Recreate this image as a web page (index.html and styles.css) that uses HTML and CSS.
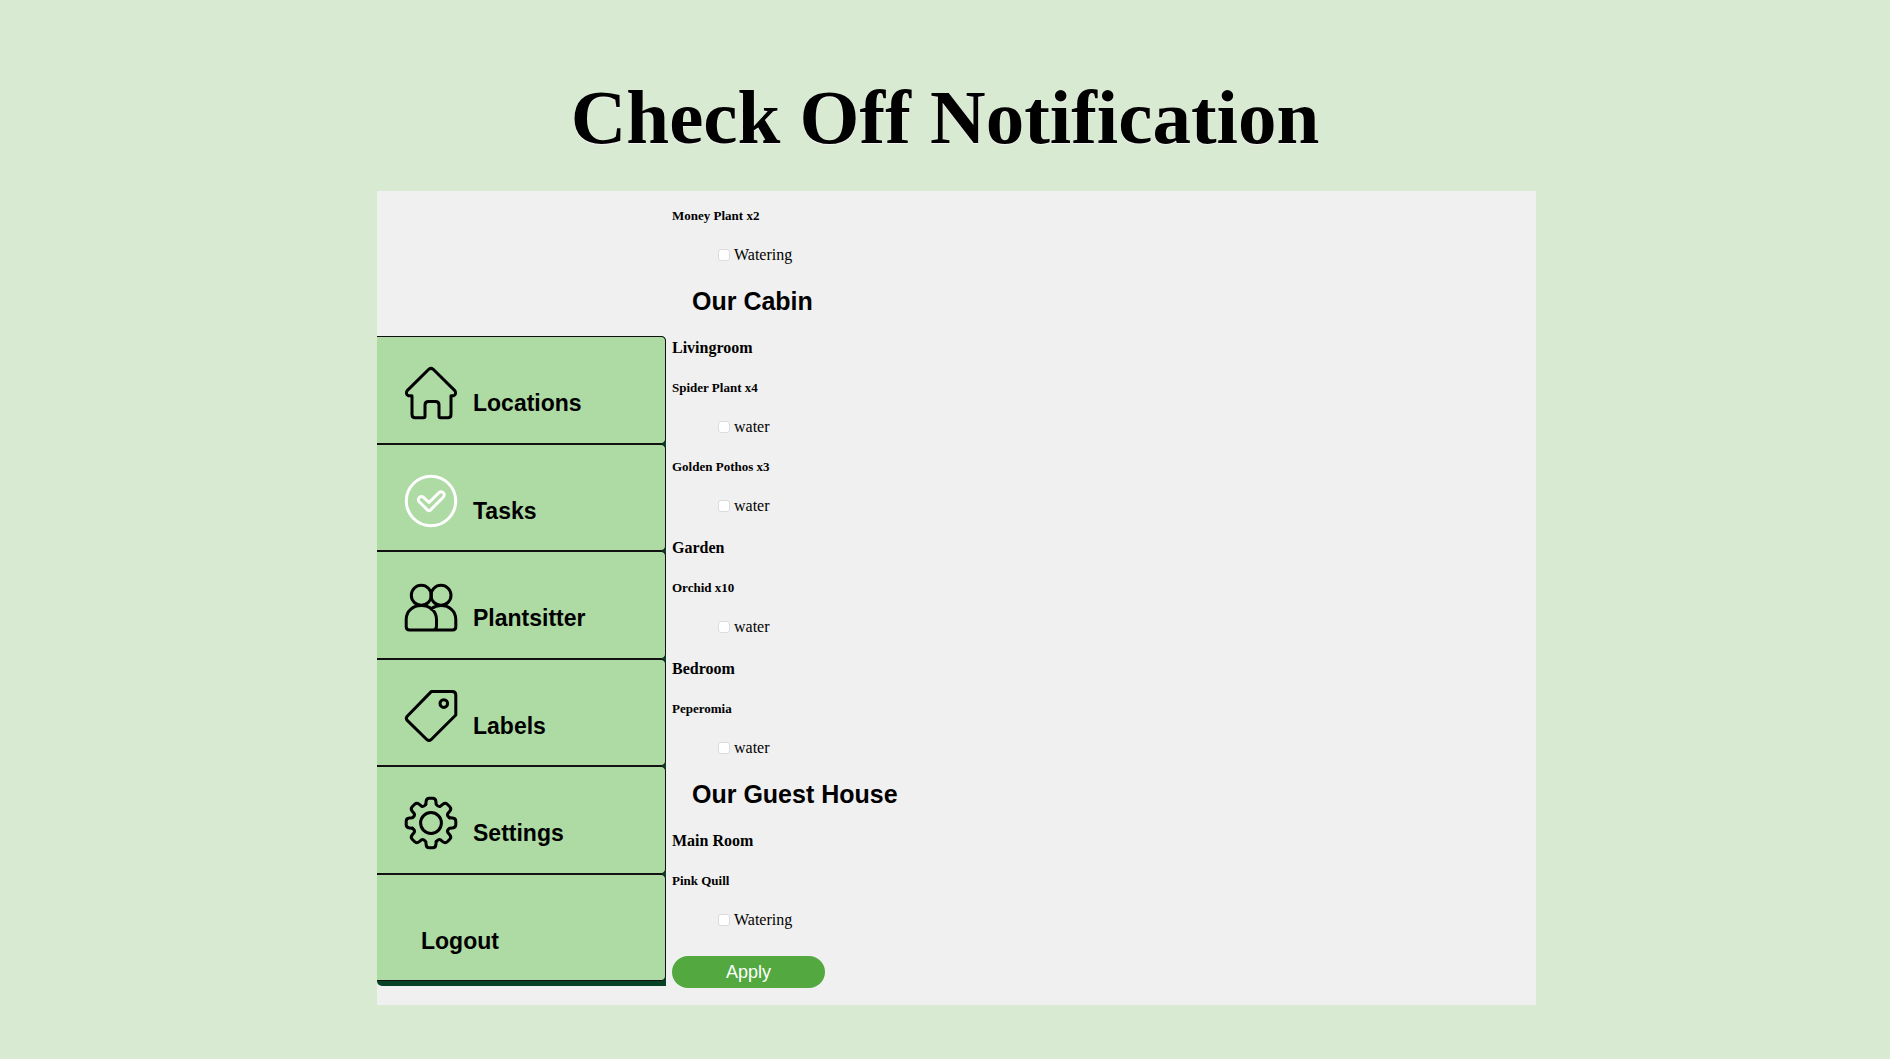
FILE: index.html
```html
<!DOCTYPE html>
<html lang="en">
<head>
<meta charset="utf-8">
<title>Check Off Notification</title>
<link rel="stylesheet" href="styles.css">
</head>
<body>
<h1 class="title">Check Off Notification</h1>
<div class="panel">
  <nav class="menu">
    <a class="item" href="#locations">
      <svg class="icon" viewBox="0 0 52 52"><path d="M23.8 2.3 2.2 23.6Q.2 27 3.4 28.8H7V47.5Q7 50.8 10 50.8H18.5Q20 50.8 20 49V38Q20 34.5 23.5 34.5H30.5Q34 34.5 34 38V49Q34 50.8 35.5 50.8H43Q46 50.8 46 47.5V28.8H48.6Q51.8 27 49.8 23.6L28.2 2.3Q26 .5 23.8 2.3Z"/></svg>
      <span>Locations</span>
    </a>
    <a class="item" href="#tasks">
      <svg class="icon icon-active" viewBox="0 0 52 52"><circle cx="26" cy="26" r="24.7"/><path d="M24 27.5 18.8 22.6A3 3 0 0 0 14.2 26.8L22.6 35.1Q24 36.4 25.4 35.1L38.2 22.2A3 3 0 0 0 34 17.6Z"/></svg>
      <span>Tasks</span>
    </a>
    <a class="item" href="#plantsitter">
      <svg class="icon" viewBox="0 0 52 52"><circle cx="16.3" cy="13.3" r="10"/><circle cx="36" cy="13.3" r="10"/><path d="M1.2 37.5C1.2 29 8 23.6 16.3 23.6S31.5 29 31.5 37.5V44Q31.5 48 28 48H4.5Q1.2 48 1.2 44.7ZM26 27C29 24.8 32 23.6 36 23.6 44 23.6 50.8 29 50.8 37.5V44.7Q50.8 48 47.5 48H27"/></svg>
      <span>Plantsitter</span>
    </a>
    <a class="item" href="#labels">
      <svg class="icon" viewBox="0 0 52 52"><path d="M26.5 1.4H47Q50.8 1.4 50.8 5V25L26 49.7Q24 51.4 22 49.7L2.2 30.4Q.4 28.3 2.2 26.2Z"/><circle cx="38.8" cy="13.6" r="3.8"/></svg>
      <span>Labels</span>
    </a>
    <a class="item" href="#settings">
      <svg class="icon" viewBox="-26 -26 52 52">
        <defs><path id="teeth" d="M-5.2-18.6-4.9-21.5Q-4.6-24.8-1.8-24.8H1.8Q4.6-24.8 4.9-21.5L5.2-18.6Q7.5-15.6 9.5-16.8L11.7-18.7Q14.3-20.8 16.3-18.8L18.8-16.3Q20.8-14.3 18.7-11.7L16.8-9.5Q15.6-7.5 18.6-5.2"/></defs>
        <use href="#teeth"/><use href="#teeth" transform="rotate(90)"/><use href="#teeth" transform="rotate(180)"/><use href="#teeth" transform="rotate(270)"/>
        <circle r="10.4"/>
      </svg>
      <span>Settings</span>
    </a>
    <a class="item item-plain" href="#logout"><span>Logout</span></a>
  </nav>
  <form class="tasks">
    <h5 class="plant">Money Plant x2</h5>
    <label class="task"><input class="tick" type="checkbox">Watering</label>
    <h2 class="place">Our Cabin</h2>
    <h4 class="room">Livingroom</h4>
    <h5 class="plant">Spider Plant x4</h5>
    <label class="task"><input class="tick" type="checkbox">water</label>
    <h5 class="plant">Golden Pothos x3</h5>
    <label class="task"><input class="tick" type="checkbox">water</label>
    <h4 class="room">Garden</h4>
    <h5 class="plant">Orchid x10</h5>
    <label class="task"><input class="tick" type="checkbox">water</label>
    <h4 class="room">Bedroom</h4>
    <h5 class="plant">Peperomia</h5>
    <label class="task"><input class="tick" type="checkbox">water</label>
    <h2 class="place">Our Guest House</h2>
    <h4 class="room">Main Room</h4>
    <h5 class="plant">Pink Quill</h5>
    <label class="task"><input class="tick" type="checkbox">Watering</label>
    <button class="apply" type="button">Apply</button>
  </form>
</div>
</body>
</html>
```
FILE: styles.css
```css
* {
  box-sizing: border-box;
}

body {
  margin: 0;
  padding: 72px 354px 54px 377px;
  background: #d8ead2;
  color: #000;
  font-family: "Liberation Serif", "Times New Roman", serif;
  font-size: 16px;
}

h1, h2, h4, h5 {
  margin: 0;
  font-weight: bold;
}

.title {
  margin: 0 0 29px -23px;
  font-size: 77px;
  line-height: 90px;
  text-align: center;
  white-space: nowrap;
  text-shadow: 0 1px 1px #f3f3f3;
}

.panel {
  display: flex;
  background: #f0f0f0;
}

.menu {
  display: grid;
  grid-auto-rows: 1fr;
  width: 289px;
  margin: 145px 6px 19px 0;
  padding-bottom: 5px;
  border-radius: 0 5px 0 5px;
  background: #064226;
}

.item {
  display: flex;
  gap: 16px;
  padding: 30px 28px 16px;
  border: 1px solid #111;
  border-left: 0;
  border-radius: 0 5px 5px 0;
  background: #aedaa4;
  color: #000;
  font: bold 23px/28px "Liberation Sans", Arial, sans-serif;
  text-decoration: none;
}

.item span {
  padding-top: 22px;
}

.item-plain {
  padding-left: 44px;
}

.icon {
  width: 52px;
  height: 52px;
  fill: none;
  stroke: #000;
  stroke-width: 3;
  stroke-linejoin: round;
  stroke-linecap: round;
  overflow: visible;
}

.icon-active {
  stroke: #fff;
}

.tasks {
  display: flex;
  flex: 1;
  flex-direction: column;
  align-items: flex-start;
  gap: 22px;
  padding: 17px 0;
}

.plant {
  font-size: 13px;
  line-height: 15px;
}

.room {
  font-size: 16px;
  line-height: 20px;
}

.place {
  margin: 0 0 1px 20px;
  font: bold 25px/28px "Liberation Sans", Arial, sans-serif;
}

.task {
  display: flex;
  align-items: center;
  gap: 4px;
  margin-left: 46px;
  line-height: 20px;
}

.tick {
  appearance: none;
  width: 12px;
  height: 12px;
  margin: 0;
  border: 1px solid #dcdcdc;
  border-radius: 3px;
  background: #fff;
}

.tick:checked {
  background: #53a940;
}

.apply {
  width: 153px;
  height: 32px;
  margin-top: 4px;
  padding: 0;
  border: 0;
  border-radius: 16px;
  background: #53a940;
  color: #fff;
  font: 18px/32px "Liberation Sans", Arial, sans-serif;
}
```
